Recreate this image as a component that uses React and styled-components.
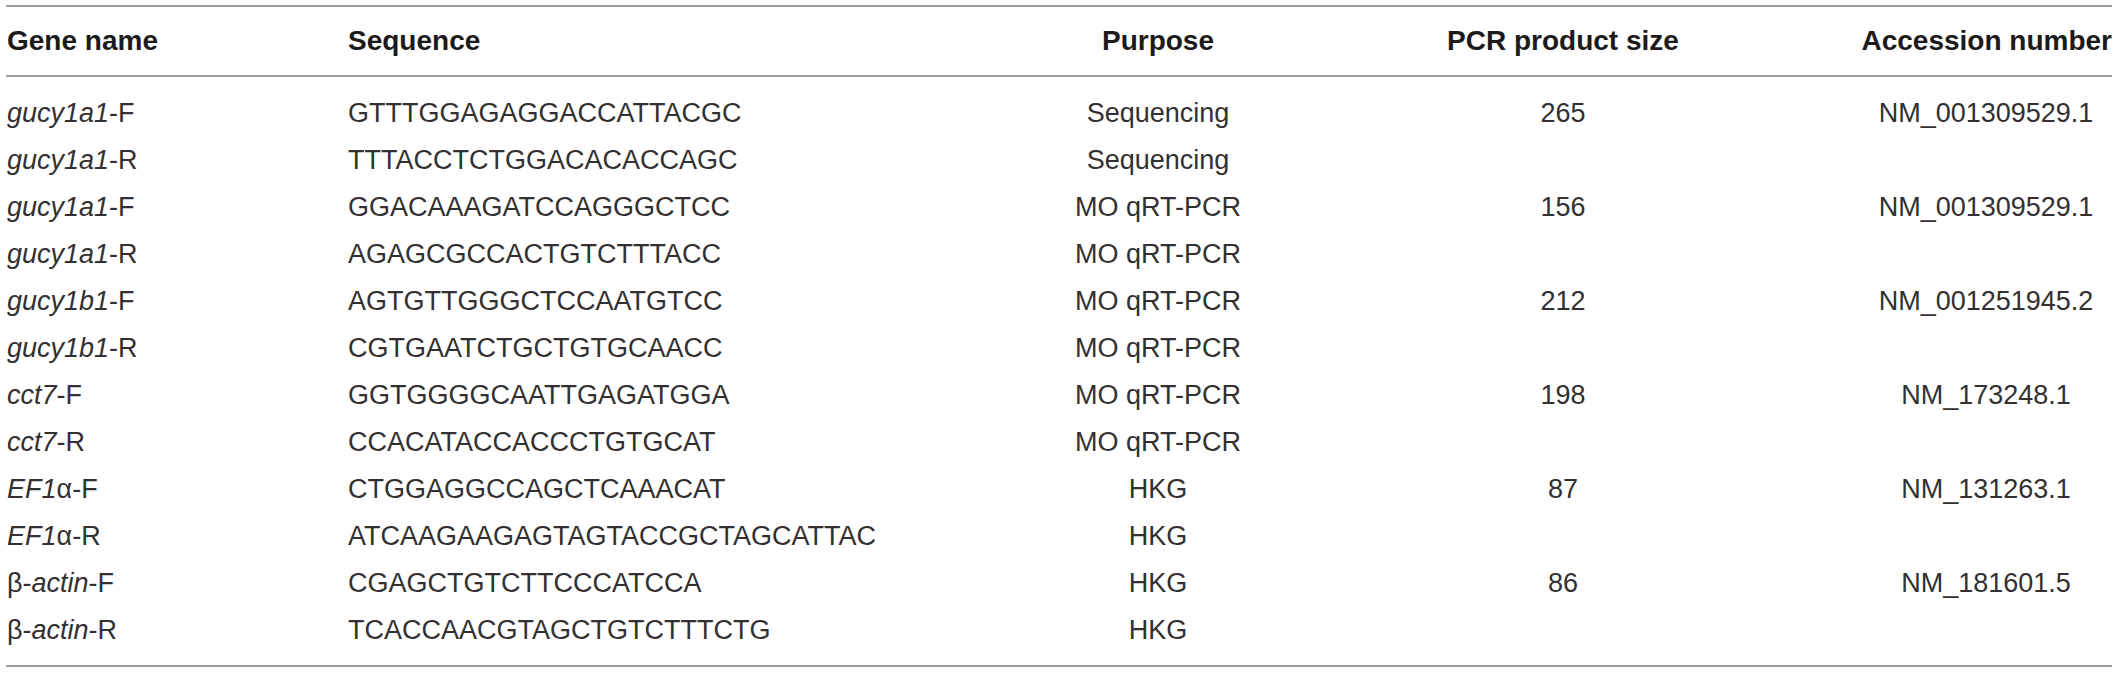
import React from 'react';
import styled, { createGlobalStyle } from 'styled-components';

const GlobalStyle = createGlobalStyle`
  html, body {
    margin: 0;
    padding: 0;
    background: #ffffff;
  }
  body {
    font-family: "Liberation Sans", Arial, sans-serif;
    color: #231f20;
  }
`;

const Table = styled.div`
  margin: 5px 6px 0 6px;
  width: 2106px;
  border-top: 2px solid #9d9d9d;
  border-bottom: 2px solid #9d9d9d;
`;

const Row = styled.div`
  display: grid;
  grid-template-columns: 342px 662px 296px 544px 262px;
  align-items: center;
  height: ${p => (p.$head ? '68px' : '47px')};
`;

const Head = styled(Row)`
  border-bottom: 2px solid #9d9d9d;
`;

const Body = styled.div`
  padding: 13px 0 11px 0;
`;

const Cell = styled.div`
  font-size: ${p => (p.$head ? '28px' : '27px')};
  font-weight: ${p => (p.$head ? 700 : 400)};
  color: ${p => (p.$head ? '#1c1a1b' : '#333031')};
  text-align: ${p => p.$align || 'left'};
  padding-left: ${p => p.$pl || '0'};
  padding-right: ${p => p.$pr || '0'};
  white-space: nowrap;
  line-height: 1;
`;

const Gene = styled.i`
  font-style: italic;
`;

const rows = [
  [<><Gene>gucy1a1</Gene>-F</>, 'GTTTGGAGAGGACCATTACGC', 'Sequencing', '265', 'NM_001309529.1'],
  [<><Gene>gucy1a1</Gene>-R</>, 'TTTACCTCTGGACACACCAGC', 'Sequencing', '', ''],
  [<><Gene>gucy1a1</Gene>-F</>, 'GGACAAAGATCCAGGGCTCC', 'MO qRT-PCR', '156', 'NM_001309529.1'],
  [<><Gene>gucy1a1</Gene>-R</>, 'AGAGCGCCACTGTCTTTACC', 'MO qRT-PCR', '', ''],
  [<><Gene>gucy1b1</Gene>-F</>, 'AGTGTTGGGCTCCAATGTCC', 'MO qRT-PCR', '212', 'NM_001251945.2'],
  [<><Gene>gucy1b1</Gene>-R</>, 'CGTGAATCTGCTGTGCAACC', 'MO qRT-PCR', '', ''],
  [<><Gene>cct7</Gene>-F</>, 'GGTGGGGCAATTGAGATGGA', 'MO qRT-PCR', '198', 'NM_173248.1'],
  [<><Gene>cct7</Gene>-R</>, 'CCACATACCACCCTGTGCAT', 'MO qRT-PCR', '', ''],
  [<><Gene>EF1</Gene>α-F</>, 'CTGGAGGCCAGCTCAAACAT', 'HKG', '87', 'NM_131263.1'],
  [<><Gene>EF1</Gene>α-R</>, 'ATCAAGAAGAGTAGTACCGCTAGCATTAC', 'HKG', '', ''],
  [<>β-<Gene>actin</Gene>-F</>, 'CGAGCTGTCTTCCCATCCA', 'HKG', '86', 'NM_181601.5'],
  [<>β-<Gene>actin</Gene>-R</>, 'TCACCAACGTAGCTGTCTTTCTG', 'HKG', '', ''],
];

export default function App() {
  return (
    <>
      <GlobalStyle />
      <Table>
        <Head $head>
          <Cell $head $pl="1px">Gene name</Cell>
          <Cell $head>Sequence</Cell>
          <Cell $head $align="center">Purpose</Cell>
          <Cell $head $align="center" $pr="30px">PCR product size</Cell>
          <Cell $head $align="right">Accession number</Cell>
        </Head>
        <Body>
          {rows.map((r, i) => (
            <Row key={i}>
              <Cell $pl="1px">{r[0]}</Cell>
              <Cell>{r[1]}</Cell>
              <Cell $align="center">{r[2]}</Cell>
              <Cell $align="center" $pr="30px">{r[3]}</Cell>
              <Cell $align="center" $pl="10px">{r[4]}</Cell>
            </Row>
          ))}
        </Body>
      </Table>
    </>
  );
}
